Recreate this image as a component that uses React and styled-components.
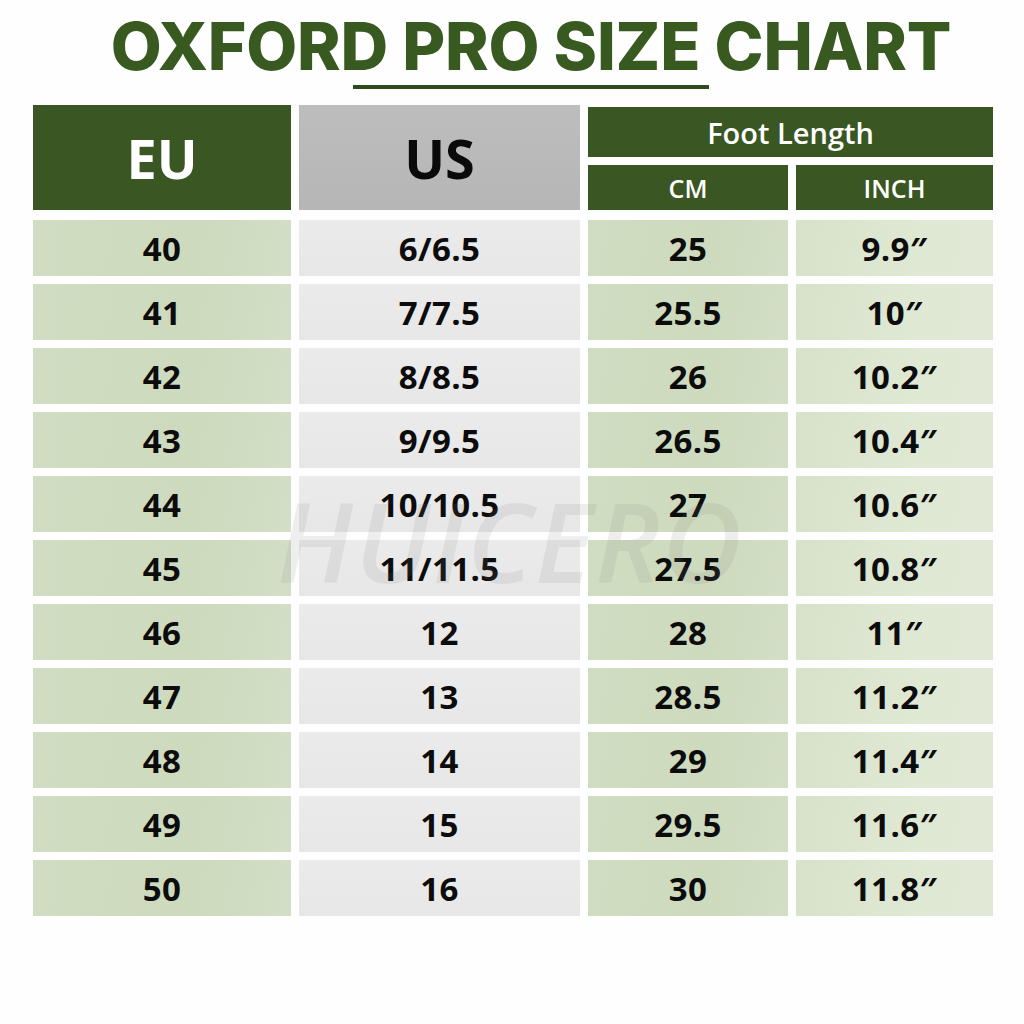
import React from 'react'
import styled, { createGlobalStyle } from 'styled-components'

const GlobalStyle = createGlobalStyle`
  body {
    margin: 0;
    background: #fefefe;
    font-family: "Open Sans", "Liberation Sans", sans-serif;
  }
`

const Page = styled.div`
  width: 1024px;
  height: 1024px;
  padding: 8px 31px 0 33px;
  box-sizing: border-box;
`

const TitleBlock = styled.div`
  display: flex;
  flex-direction: column;
  align-items: center;
  padding-left: 36px;
`

const Title = styled.h1`
  margin: 0;
  font-family: "Inter", "DejaVu Sans", sans-serif;
  font-weight: 800;
  font-size: 66px;
  line-height: 76px;
  color: #385a20;
  letter-spacing: -0.2px;
  white-space: nowrap;
`

const Underline = styled.div`
  width: 356px;
  height: 4px;
  margin-top: 1px;
  background: #2f4a1c;
`

const TableWrap = styled.div`
  position: relative;
  margin-top: 18px;
`

const Grid = styled.div`
  display: grid;
  grid-template-columns: 258px 281px 200px 197px;
  grid-template-rows: 50px 47px;
  grid-auto-rows: 56px;
  column-gap: 8px;
  row-gap: 8px;
`

const HeadCell = styled.div`
  display: flex;
  align-items: center;
  justify-content: center;
  background: ${p => (p.$gray ? 'linear-gradient(180deg, #bdbdbd, #b6b6b6)' : '#3a5622')};
  color: ${p => (p.$gray ? '#0a0a0a' : '#ffffff')};
  font-weight: ${p => p.$weight || 700};
  font-size: ${p => p.$size || 24}px;
  grid-row: ${p => p.$rows || 'auto'};
  grid-column: ${p => p.$cols || 'auto'};
  margin-top: ${p => (p.$tall ? '-2px' : '0')};
  margin-bottom: ${p => (p.$short ? '2px' : '0')};
`

const CELL_BG = {
  green: 'linear-gradient(100deg, #d1ddc2 0%, #cddabd 60%, #d3dec6 100%)',
  gray: 'linear-gradient(180deg, #ebebeb, #e7e7e7)',
  light: 'linear-gradient(100deg, #d8e2ca 0%, #dfe8d3 60%, #e1e9d6 100%)',
}

const Cell = styled.div`
  display: flex;
  align-items: center;
  justify-content: center;
  background: ${p => CELL_BG[p.$tone]};
  color: #0c0c0c;
  font-weight: 700;
  font-size: 33px;
  letter-spacing: 0.4px;
`

const Watermark = styled.div`
  position: absolute;
  left: 244px;
  top: 358px;
  font-family: "Open Sans", sans-serif;
  font-style: italic;
  font-weight: 600;
  font-size: 110px;
  letter-spacing: 2px;
  color: rgba(120, 120, 120, 0.12);
  pointer-events: none;
`

const rows = [
  ['40', '6/6.5', '25', '9.9″'],
  ['41', '7/7.5', '25.5', '10″'],
  ['42', '8/8.5', '26', '10.2″'],
  ['43', '9/9.5', '26.5', '10.4″'],
  ['44', '10/10.5', '27', '10.6″'],
  ['45', '11/11.5', '27.5', '10.8″'],
  ['46', '12', '28', '11″'],
  ['47', '13', '28.5', '11.2″'],
  ['48', '14', '29', '11.4″'],
  ['49', '15', '29.5', '11.6″'],
  ['50', '16', '30', '11.8″'],
]

const tones = ['green', 'gray', 'green', 'light']

export default function App() {
  return (
    <Page>
      <GlobalStyle />
      <TitleBlock>
        <Title>OXFORD PRO SIZE CHART</Title>
        <Underline />
      </TitleBlock>
      <TableWrap>
        <Grid>
          <HeadCell $rows="1 / 3" $size={54} $tall $short>EU</HeadCell>
          <HeadCell $rows="1 / 3" $size={54} $gray $tall $short>US</HeadCell>
          <HeadCell $cols="3 / 5" $size={29} $weight={600}>Foot Length</HeadCell>
          <HeadCell $size={25} $weight={600} $short>CM</HeadCell>
          <HeadCell $size={25} $weight={600} $short>INCH</HeadCell>
          {rows.map((r, i) =>
            r.map((v, j) => (
              <Cell key={i + '-' + j} $tone={tones[j]}>{v}</Cell>
            ))
          )}
        </Grid>
        <Watermark>HUICERO</Watermark>
      </TableWrap>
    </Page>
  )
}
